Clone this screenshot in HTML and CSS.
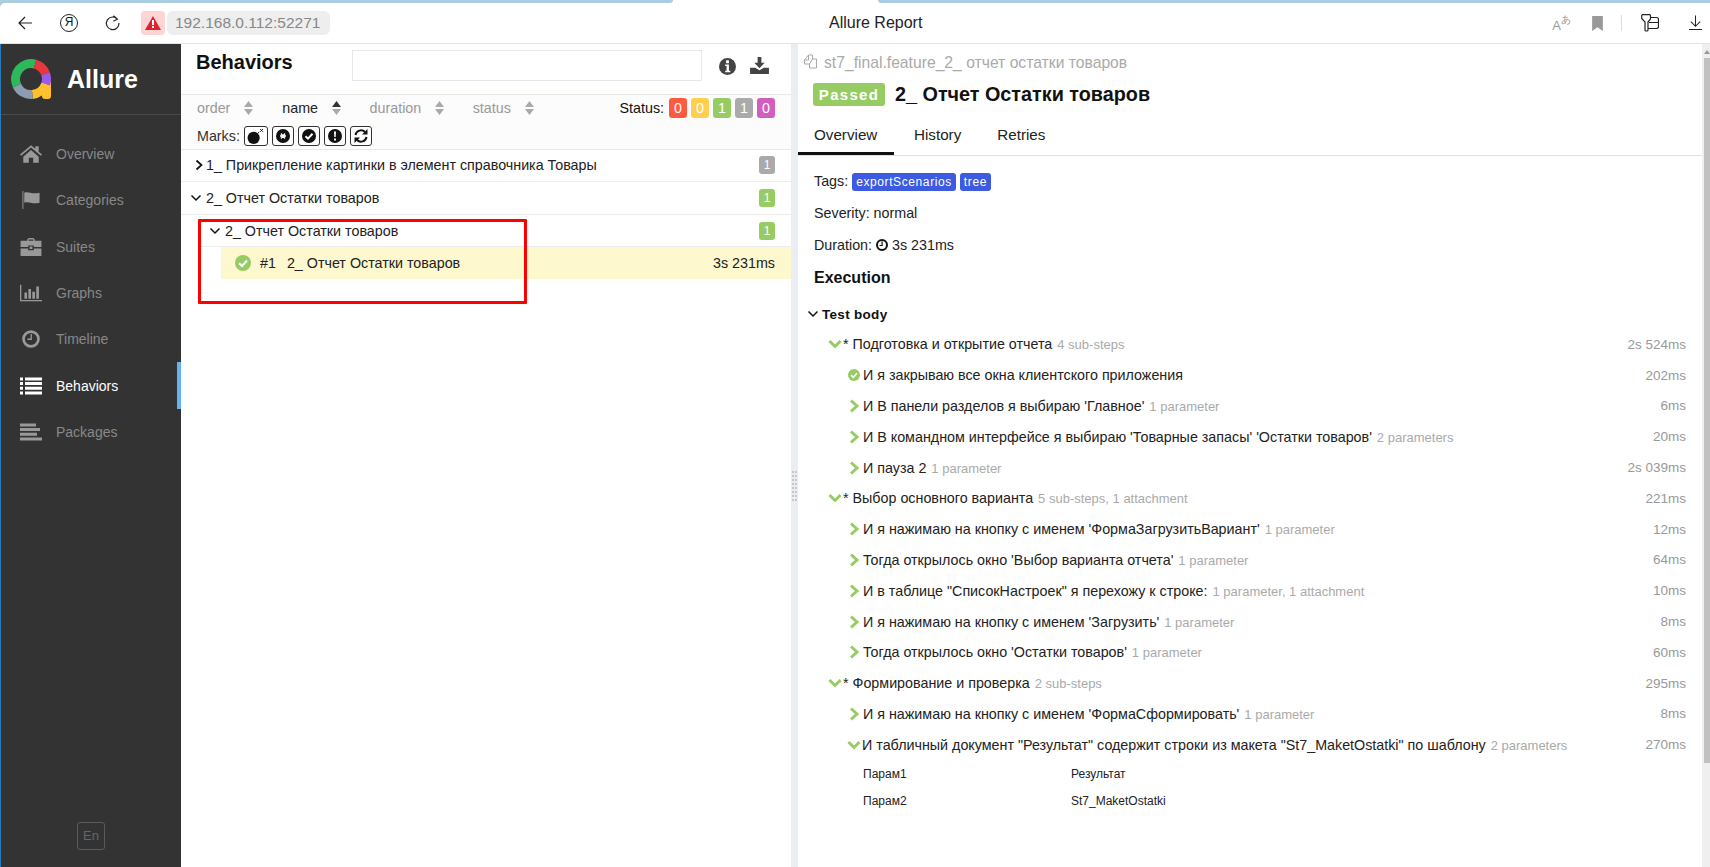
FILE: index.html
```html
<!DOCTYPE html>
<html>
<head>
<meta charset="utf-8">
<title>Allure Report</title>
<link rel="stylesheet" href="styles.css">
</head>
<body>
<svg class="defs" width="0" height="0">
  <symbol id="chev-right" viewBox="0 0 12 12"><path d="M3.500 1.500 8.500 6l-5 4.500" fill="none" stroke="currentColor" stroke-width="1.700"/></symbol>
  <symbol id="chev-down" viewBox="0 0 12 12"><path d="M1.500 3.500 6 8l4.500-4.500" fill="none" stroke="currentColor" stroke-width="1.500"/></symbol>
  <symbol id="check-circle" viewBox="0 0 16 16"><circle cx="8" cy="8" r="8" fill="currentColor"/><path d="M4 8.200 7 11l5-5.400" fill="none" stroke="#fff" stroke-width="2.200"/></symbol>
  <symbol id="step-right" viewBox="0 0 12 14"><path d="M3 1.500 9 7l-6 5.500" fill="none" stroke="#97cc64" stroke-width="3"/></symbol>
  <symbol id="step-down" viewBox="0 0 14 10"><path d="M1.500 2 7 7.500 12.500 2" fill="none" stroke="#97cc64" stroke-width="3"/></symbol>
  <symbol id="sort" viewBox="0 0 9 14"><path d="M4.500 0 9 6H0zM4.500 14 0 8h9z" fill="currentColor"/></symbol>
</svg>

<header class="toolbar">
  <div class="strip"><span></span><span></span></div>
  <div class="toolbar-row">
    <svg class="tb-icon back" viewBox="0 0 16 16"><path d="M15 8H2M8 2 2 8l6 6" fill="none" stroke="#222" stroke-width="1.200"/></svg>
    <span class="ya">Я</span>
    <svg class="tb-icon reload" viewBox="0 0 16 16"><path d="M12.500 4.200A6.300 6.300 0 1 0 14 8M8.500 .8l3.800 3.400-4 2" fill="none" stroke="#222" stroke-width="1.200"/></svg>
    <span class="warn"><svg viewBox="0 0 16 14" width="16" height="14"><path d="M8 0 16 14H0z" fill="#e0222f"/><path d="M7 4h2v5H7zM7 10h2v2H7z" fill="#fff"/></svg></span>
    <span class="address">192.168.0.112:52271</span>
    <span class="page-title">Allure Report</span>
    <div class="tb-right">
      <span class="translate">A<small>あ</small></span>
      <svg class="bookmark" viewBox="0 0 10 14"><path d="M0 0h10v14L5 10.500 0 14z" fill="#999"/></svg>
      <i class="tb-sep"></i>
      <svg class="collections" viewBox="0 0 18 18"><path d="M1.500 .7h7a1 1 0 0 1 1 1V5L7 8v8a1 1 0 0 1-1 1H5a1 1 0 0 1-1-1V8L.7 4.500V1.500z" fill="none" stroke="#222" stroke-width="1.200"/><path d="M9.500 3.500h6a2 2 0 0 1 2 2v7a2 2 0 0 1-2 2H7M8 8.500h9.500" fill="none" stroke="#222" stroke-width="1.200"/></svg>
      <svg class="tb-icon download" viewBox="0 0 14 16"><path d="M7 0v11M2 6.500l5 5 5-5M0 15h14" fill="none" stroke="#222" stroke-width="1.100"/></svg>
    </div>
  </div>
</header>

<div class="app">
  <aside class="side">
    <div class="brand">
      <svg class="logo" viewBox="0 0 40 40" fill="none" stroke-width="9">
        <rect x="31" y="21" width="9" height="19" rx="3" fill="#ffc02e" stroke="none"/>
        <path d="M5.960 26.550A15.500 15.500 0 0 1 24 5.030" stroke="#2eb85c"/>
        <path d="M24 5.030A15.500 15.500 0 0 1 34.570 14.700" stroke="#e8383d"/>
        <path d="M34.570 14.700A15.500 15.500 0 0 1 34.570 25.300" stroke="#9a5ce6"/>
        <path d="M34.570 25.300A15.500 15.500 0 0 1 21.350 35.440" stroke="#ffc02e"/>
        <path d="M21.350 35.440A15.500 15.500 0 0 1 5.960 26.550" stroke="#8d9cb0"/>
      </svg>
      <span class="brand-name">Allure</span>
    </div>
    <nav class="menu">
      <a class="menu-item"><svg viewBox="0 0 20 16"><path d="M10 0 0 8.500l1 1.200L10 2l9 7.700 1-1.200-3-2.600V1h-3v2.300zM3 10.500V16h5v-4.500h4V16h5v-5.500L10 4.300z" fill="currentColor"/></svg>Overview</a>
      <a class="menu-item"><svg viewBox="0 0 21 20"><path d="M1 0h1v20H1z M3 2c5-2 7 2 17 0v11c-8 2-12-2-17 0z" fill="currentColor"/></svg>Categories</a>
      <a class="menu-item"><svg viewBox="0 0 22 19"><path d="M7 3V1.500L8.500 0h5L15 1.500V3h7v6.500h-8V8H8v1.500H0V3zM8.500 3h5V1.500h-5zM0 11h8v2h6v-2h8v8H0zM9.500 9h3v2.500h-3z" fill="currentColor"/></svg>Suites</a>
      <a class="menu-item"><svg viewBox="0 0 25 19"><path d="M0 0h1.500v17.500H25V19H0zM5 9h3v7H5zM9.500 5h3v11h-3zM14 8h3v8h-3zM18.500 2h3v14h-3z" fill="currentColor"/></svg>Graphs</a>
      <a class="menu-item"><svg viewBox="0 0 20 20"><circle cx="10" cy="10" r="8.300" fill="none" stroke="currentColor" stroke-width="3"/><path d="M9.500 4.500H11V11H6V9.500h3.500z" fill="currentColor"/></svg>Timeline</a>
      <a class="menu-item active"><svg viewBox="0 0 22 17"><path d="M0 0h3v3H0zM5 0h17v3H5zM0 4.600h3v3H0zM5 4.600h17v3H5zM0 9.300h3v3H0zM5 9.300h17v3H5zM0 14h3v3H0zM5 14h17v3H5z" fill="currentColor"/></svg>Behaviors</a>
      <a class="menu-item"><svg viewBox="0 0 22 17"><path d="M0 0h16v3H0zM0 4.600h20v3H0zM0 9.300h17v3H0zM0 14h22v3H0z" fill="currentColor"/></svg>Packages</a>
    </nav>
    <div class="lang"><span>En</span></div>
  </aside>

  <section class="left">
    <div class="pane-head">
      <h2>Behaviors</h2>
      <input class="search" type="text">
      <svg class="head-icon info" viewBox="0 0 18 18"><circle cx="9" cy="9" r="9" fill="#444"/><path d="M7.500 2.500h3v3h-3zM6.500 7h4v6.500H12V15H6.500v-1.500H8V8.500H6.500z" fill="#fff"/></svg>
      <svg class="head-icon dl" viewBox="0 0 20 18"><path d="M8 0h4v6h3.500L10 12 4.500 6H8z" fill="#444"/><path d="M0 11.500h5.500L10 14l4.500-2.500H20V18H0z" fill="#444"/></svg>
    </div>
    <div class="sorter">
      <div class="sort-row">
        <span class="sort-cell order">order<svg><use href="#sort"/></svg></span>
        <span class="sort-cell name">name<svg class="asc" viewBox="0 0 9 14"><path d="M4.500 0 9 6H0z" fill="#333"/><path d="M4.500 14 0 8h9z" fill="#aaa"/></svg></span>
        <span class="sort-cell duration">duration<svg><use href="#sort"/></svg></span>
        <span class="sort-cell status">status<svg><use href="#sort"/></svg></span>
        <span class="status-label">Status:</span>
        <span class="counts">
          <b class="broken-red">0</b><b class="yellow">0</b><b class="green">1</b><b class="gray">1</b><b class="pink">0</b>
        </span>
      </div>
      <div class="marks">
        Marks:
        <button class="mark wide"><svg viewBox="0 0 18 16"><circle cx="7" cy="9.500" r="6.500" fill="#111"/><path d="M11 5l2-2M14 0l3 3M17 0l-3 3" stroke="#111" stroke-width="1"/></svg></button>
        <button class="mark"><svg viewBox="0 0 14 14"><circle cx="7" cy="7" r="7" fill="#111"/><path d="M4 7h6M5 4.500l4 5M9 4.500l-4 5" stroke="#fff" stroke-width="1.300"/></svg></button>
        <button class="mark"><svg viewBox="0 0 14 14"><circle cx="7" cy="7" r="7" fill="#111"/><path d="M3.500 7.200 6 9.600l4.500-4.800" fill="none" stroke="#fff" stroke-width="2"/></svg></button>
        <button class="mark"><svg viewBox="0 0 14 14"><circle cx="7" cy="7" r="7" fill="#111"/><path d="M6 2.500h2L7.700 8H6.300zM6 9.500h2v2H6z" fill="#fff"/></svg></button>
        <button class="mark"><svg viewBox="0 0 14 14"><path d="M1.500 6A5.600 5.600 0 0 1 11 3M12.500 8A5.600 5.600 0 0 1 3 11" fill="none" stroke="#111" stroke-width="2"/><path d="M13.500 0v5.500H8zM.5 14V8.500H6z" fill="#111"/></svg></button>
      </div>
    </div>
    <div class="tree">
      <div class="tree-row first">
        <svg class="chev"><use href="#chev-right"/></svg>
        <span class="tree-name">1_ Прикрепление картинки в элемент справочника Товары</span>
        <b class="tree-count gray">1</b>
      </div>
      <div class="tree-row">
        <svg class="chev"><use href="#chev-down"/></svg>
        <span class="tree-name">2_ Отчет Остатки товаров</span>
        <b class="tree-count green">1</b>
      </div>
      <div class="tree-row nested">
        <svg class="chev"><use href="#chev-down"/></svg>
        <span class="tree-name">2_ Отчет Остатки товаров</span>
        <b class="tree-count green">1</b>
      </div>
      <div class="tree-leaf">
        <svg class="leaf-check"><use href="#check-circle"/></svg>
        <span class="leaf-num">#1</span>
        <span class="tree-name">2_ Отчет Остатки товаров</span>
        <span class="leaf-time">3s 231ms</span>
      </div>
      <div class="red-box"></div>
    </div>
  </section>

  <div class="splitter"><i></i></div>

  <section class="right">
    <div class="crumb">
      <svg viewBox="0 0 15 15"><path d="M5.500 1h4v4h4v9h-7V10h-5V6z M5.500 1v5h-4M9.500 5l-3 5h0" fill="none" stroke="#aaa" stroke-width="1"/></svg>
      <span>st7_final.feature_2_ отчет остатки товаров</span>
    </div>
    <div class="title-row">
      <span class="passed">Passed</span>
      <h1>2_ Отчет Остатки товаров</h1>
    </div>
    <div class="tabs">
      <a class="tab active">Overview</a>
      <a class="tab">History</a>
      <a class="tab">Retries</a>
    </div>
    <div class="details">
      <div class="meta first">Tags: <span class="tag">exportScenarios</span> <span class="tag">tree</span></div>
      <div class="meta">Severity: normal</div>
      <div class="meta">Duration: <svg class="clock" viewBox="0 0 12 12"><circle cx="6" cy="6" r="5" fill="none" stroke="#111" stroke-width="2"/><path d="M5.500 2.500h1.200V7H3.500V5.900h2z" fill="#111"/></svg> 3s 231ms</div>
      <h3>Execution</h3>
      <div class="body-head"><svg class="chev"><use href="#chev-down"/></svg>Test body</div>

      <div class="step lvl1"><svg class="ico-down"><use href="#step-down"/></svg><span class="step-text">* Подготовка и открытие отчета <small>4 sub-steps</small></span><span class="step-time">2s 524ms</span></div>
      <div class="step lvl2"><svg class="ico-check"><use href="#check-circle"/></svg><span class="step-text">И я закрываю все окна клиентского приложения</span><span class="step-time">202ms</span></div>
      <div class="step lvl2"><svg class="ico-right"><use href="#step-right"/></svg><span class="step-text">И В панели разделов я выбираю 'Главное' <small>1 parameter</small></span><span class="step-time">6ms</span></div>
      <div class="step lvl2"><svg class="ico-right"><use href="#step-right"/></svg><span class="step-text">И В командном интерфейсе я выбираю 'Товарные запасы' 'Остатки товаров' <small>2 parameters</small></span><span class="step-time">20ms</span></div>
      <div class="step lvl2"><svg class="ico-right"><use href="#step-right"/></svg><span class="step-text">И пауза 2 <small>1 parameter</small></span><span class="step-time">2s 039ms</span></div>

      <div class="step lvl1"><svg class="ico-down"><use href="#step-down"/></svg><span class="step-text">* Выбор основного варианта <small>5 sub-steps, 1 attachment</small></span><span class="step-time">221ms</span></div>
      <div class="step lvl2"><svg class="ico-right"><use href="#step-right"/></svg><span class="step-text">И я нажимаю на кнопку с именем 'ФормаЗагрузитьВариант' <small>1 parameter</small></span><span class="step-time">12ms</span></div>
      <div class="step lvl2"><svg class="ico-right"><use href="#step-right"/></svg><span class="step-text">Тогда открылось окно 'Выбор варианта отчета' <small>1 parameter</small></span><span class="step-time">64ms</span></div>
      <div class="step lvl2"><svg class="ico-right"><use href="#step-right"/></svg><span class="step-text">И в таблице "СписокНастроек" я перехожу к строке: <small>1 parameter, 1 attachment</small></span><span class="step-time">10ms</span></div>
      <div class="step lvl2"><svg class="ico-right"><use href="#step-right"/></svg><span class="step-text">И я нажимаю на кнопку с именем 'Загрузить' <small>1 parameter</small></span><span class="step-time">8ms</span></div>
      <div class="step lvl2"><svg class="ico-right"><use href="#step-right"/></svg><span class="step-text">Тогда открылось окно 'Остатки товаров' <small>1 parameter</small></span><span class="step-time">60ms</span></div>

      <div class="step lvl1"><svg class="ico-down"><use href="#step-down"/></svg><span class="step-text">* Формирование и проверка <small>2 sub-steps</small></span><span class="step-time">295ms</span></div>
      <div class="step lvl2"><svg class="ico-right"><use href="#step-right"/></svg><span class="step-text">И я нажимаю на кнопку с именем 'ФормаСформировать' <small>1 parameter</small></span><span class="step-time">8ms</span></div>
      <div class="step lvl2"><svg class="ico-down small"><use href="#step-down"/></svg><span class="step-text">И табличный документ "Результат" содержит строки из макета "St7_MaketOstatki" по шаблону <small>2 parameters</small></span><span class="step-time">270ms</span></div>

      <div class="params">
        <span>Парам1</span><span>Результат</span>
        <span>Парам2</span><span>St7_MaketOstatki</span>
      </div>
    </div>
  </section>
  <div class="scroll"><i></i></div>
</div>
</body>
</html>
```
FILE: styles.css
```css
* { box-sizing: border-box; }
html, body { margin: 0; height: 100%; overflow: hidden; }
body { font-family: "Liberation Sans", Arial, sans-serif; font-size: 14.3px; color: #111; background: #fff; display: flex; flex-direction: column; }
.defs { position: absolute; }

/* browser chrome */
.toolbar { height: 44px; flex: none; border-bottom: 1px solid #e4e4e4; background: linear-gradient(90deg, #abcde0 5px, #fff 5px); }
.strip { height: 3px; display: flex; justify-content: space-between; background: #fff; }
.strip span { width: 673px; background: #abcde0; border-bottom-right-radius: 4px; }
.strip span + span { width: 832px; border-radius: 0 0 0 4px; }
.toolbar-row { height: 40px; display: flex; align-items: center; position: relative; background: #fff; border-top-left-radius: 5px; }
.tb-icon { width: 16px; height: 16px; flex: none; }
.back { margin-left: 17px; }
.ya { width: 18px; height: 18px; margin-left: 27px; border: 1.3px solid #222; border-radius: 50%; font-size: 12px; line-height: 15px; text-align: center; }
.reload { margin-left: 27px; }
.warn { width: 24px; height: 24px; margin-left: 20px; background: #fdd5d5; border-radius: 4px; display: flex; align-items: center; justify-content: center; }
.address { height: 24px; width: 163px; margin-left: 2px; padding-left: 8px; background: #eee; border-radius: 6px; color: #888; font-size: 15.5px; line-height: 24px; }
.page-title { position: absolute; left: 829px; color: #222; font-size: 16px; }
.tb-right { margin-left: auto; display: flex; align-items: center; padding-right: 8px; }
.translate { color: #999; font-size: 13px; white-space: nowrap; position: relative; top: 3px; }
.translate small { font-size: 10px; position: relative; top: -7px; }
.bookmark { width: 11px; height: 15px; margin-left: 21px; }
.tb-sep { width: 1px; height: 16px; background: #ddd; margin-left: 18px; }
.collections { width: 18px; height: 18px; margin-left: 19px; }
.download { margin-left: 30px; width: 13px; }

.app { flex: 1; display: flex; min-height: 0; }

/* sidebar */
.side { width: 181px; flex: none; background: #333; border-left: 1px solid #2a7ab8; display: flex; flex-direction: column; }
.brand { height: 71px; flex: none; border-bottom: 1px solid #4a4a4a; display: flex; align-items: center; padding-left: 10px; }
.logo { width: 40px; height: 40px; }
.brand-name { margin-left: 16px; color: #fff; font-size: 25px; font-weight: bold; }
.menu { padding-top: 16px; }
.menu-item { height: 46.3px; display: flex; align-items: center; padding-left: 19px; color: #888; font-size: 14px; position: relative; }
.menu-item svg { width: 22px; height: 18px; margin-right: 14px; color: #999; flex: none; }
.menu-item.active { color: #fff; }
.menu-item.active svg { color: #fff; }
.menu-item.active::after { content: ""; position: absolute; right: 0; top: 0; bottom: 0; width: 4px; background: #62b3f0; }
.lang { margin-top: auto; padding-bottom: 17px; text-align: center; }
.lang span { display: inline-block; width: 28px; height: 28px; border: 1px solid #5a5a5a; border-radius: 3px; color: #666; line-height: 26px; font-size: 13px; }

/* left pane */
.left { width: 610px; flex: none; display: flex; flex-direction: column; position: relative; }
.pane-head { height: 50px; flex: none; display: flex; align-items: flex-start; padding: 6px 21px 0 15px; }
.pane-head h2 { margin: 0; width: 156px; font-size: 20px; line-height: 24px; }
.search { width: 350px; height: 31px; border: 1px solid #e4e8ec; outline: 0; background: #fff; }
.head-icon.info { width: 17px; height: 17px; margin: 8px 0 0 17px; }
.head-icon.dl { width: 19px; height: 17px; margin: 7px 0 0 14px; }
.sorter { height: 56px; flex: none; padding: 3px 16px 0 16px; background: #fcfcfc; border-top: 1px solid #e8e8e8; border-bottom: 1px solid #e8e8e8; color: #999; }
.sort-row { display: flex; align-items: center; height: 20px; }
.sort-cell { display: flex; align-items: center; gap: 14px; }
.sort-cell svg { width: 9px; height: 14px; color: #aaa; }
.order { width: 86px; }
.name { width: 88px; color: #222; }
.duration { width: 104px; }
.status { width: 148px; }
.status-label { margin-left: auto; color: #111; margin-right: 5px; }
.counts { display: flex; gap: 4px; }
.counts b, .tree-count { font-weight: normal; color: #fff; border-radius: 3px; text-align: center; }
.counts b { width: 18px; height: 20px; line-height: 20px; }
.broken-red { background: #fd5a3e; }
.yellow { background: #ffd050; }
.green { background: #97cc64; }
.gray { background: #aaa; }
.pink { background: #d35ebe; }
.marks { display: flex; align-items: center; height: 20px; color: #333; margin-top: 8px; gap: 4px; }
.mark { width: 22px; height: 20px; padding: 0; background: #fff; border: 1px solid #333; border-radius: 3px; display: flex; align-items: center; justify-content: center; }
.mark svg { width: 14px; height: 14px; }
.mark.wide { width: 24px; }
.mark.wide svg { width: 17px; height: 15px; }

.tree { position: relative; flex: 1; margin-top: -1px; }
.tree-row { height: 33px; display: flex; align-items: center; padding: 0 16px 0 9px; border-bottom: 1px solid #ececec; color: #222; }
.tree-row.first .chev { margin-left: 3px; margin-right: 1px; }
.tree-row.nested { margin-left: 19px; padding-left: 9px; height: 32px; border-bottom: 1px solid #e8eef4; }
.chev { width: 12px; height: 12px; flex: none; margin-right: 4px; color: #111; }
.tree-count { margin-left: auto; width: 16px; height: 18px; line-height: 18px; font-size: 12px; }
.tree-leaf { margin-left: 40px; height: 32px; display: flex; align-items: center; padding-left: 14px; padding-right: 16px; background: #fdf8ce; color: #222; }
.leaf-check { width: 16px; height: 16px; color: #97cc64; flex: none; }
.leaf-num { margin: 0 11px 0 9px; }
.leaf-time { margin-left: auto; }
/* the red frame was painted over the screenshot */
.red-box { position: absolute; left: 17px; top: 70px; width: 329px; height: 85px; border: 3px solid #f00; border-radius: 1px; }

.splitter { width: 7px; flex: none; background: #eaeef2; display: flex; justify-content: center; align-items: flex-start; }
.splitter i { width: 5px; height: 31px; margin-top: 427px; background: repeating-linear-gradient(#c8c8c8 0 2px, transparent 2px 4px) left / 2px 100% no-repeat, repeating-linear-gradient(#c8c8c8 0 2px, transparent 2px 4px) right / 2px 100% no-repeat; }

/* right pane */
.right { flex: 1; min-width: 0; }
.crumb { height: 38px; padding: 10px 0 0 5px; color: #aaa; font-size: 15.7px; display: flex; align-items: flex-start; gap: 6px; line-height: 18px; }
.crumb svg { width: 15px; height: 15px; flex: none; }
.title-row { display: flex; align-items: center; height: 25px; padding-left: 15px; }
.passed { width: 72px; height: 23px; background: #97cc64; color: #fff; border-radius: 3px; font-weight: bold; font-size: 15px; letter-spacing: 1.3px; line-height: 23px; text-align: center; }
.title-row h1 { margin: 0 0 0 10px; font-size: 19.8px; line-height: 25px; }
.tabs { height: 34px; margin-top: 15px; display: flex; border-bottom: 1px solid #e0e0e0; }
.tab { height: 33px; padding: 0 16px; line-height: 26px; font-size: 15.2px; color: #222; margin-right: 4px; }
.tab.active { width: 96px; border-bottom: 3px solid #111; }
.details { padding: 9px 16px 0 16px; color: #222; }
.meta { height: 32px; line-height: 32px; }
.tag { display: inline-block; background: #3d5be0; color: #fff; font-size: 12px; letter-spacing: .6px; border-radius: 3px; padding: 0 4px; height: 18px; line-height: 18px; }
.clock { width: 12px; height: 12px; vertical-align: -1px; }
.details h3 { margin: 1px 0 0; font-size: 16px; line-height: 32px; color: #111; }
.body-head { height: 35px; margin-left: -7px; display: flex; align-items: center; font-weight: bold; font-size: 13.5px; color: #111; padding-top: 5px; letter-spacing: .3px; }
.body-head .chev { margin-right: 3px; }
.step { height: 30.8px; display: flex; align-items: center; }
.lvl1 { padding-left: 14px; }
.lvl2 { padding-left: 34px; }
.step svg { flex: none; }
.ico-down { width: 14px; height: 10px; margin-right: 1px; }
.ico-down.small { margin-left: -1px; }
.ico-right { width: 12px; height: 14px; margin-right: 3px; }
.ico-check { width: 12px; height: 12px; margin-right: 3px; color: #97cc64; }
.step-text small { color: #aaa; font-size: 13px; margin-left: 1px; }
.step-time { margin-left: auto; color: #999; font-size: 13.5px; }
.params { display: grid; grid-template-columns: 208px 1fr; grid-auto-rows: 27px; padding-left: 49px; font-size: 12px; align-items: center; }

.scroll { width: 8px; flex: none; background: #efefef; padding: 14px 0 0 2px; position: relative; }
.scroll::before { content: ""; position: absolute; left: 2px; top: 6px; border: 3px solid transparent; border-top: 0; border-bottom: 4px solid #999; }
.scroll i { display: block; height: 705px; background: #c1c1c1; }
```
